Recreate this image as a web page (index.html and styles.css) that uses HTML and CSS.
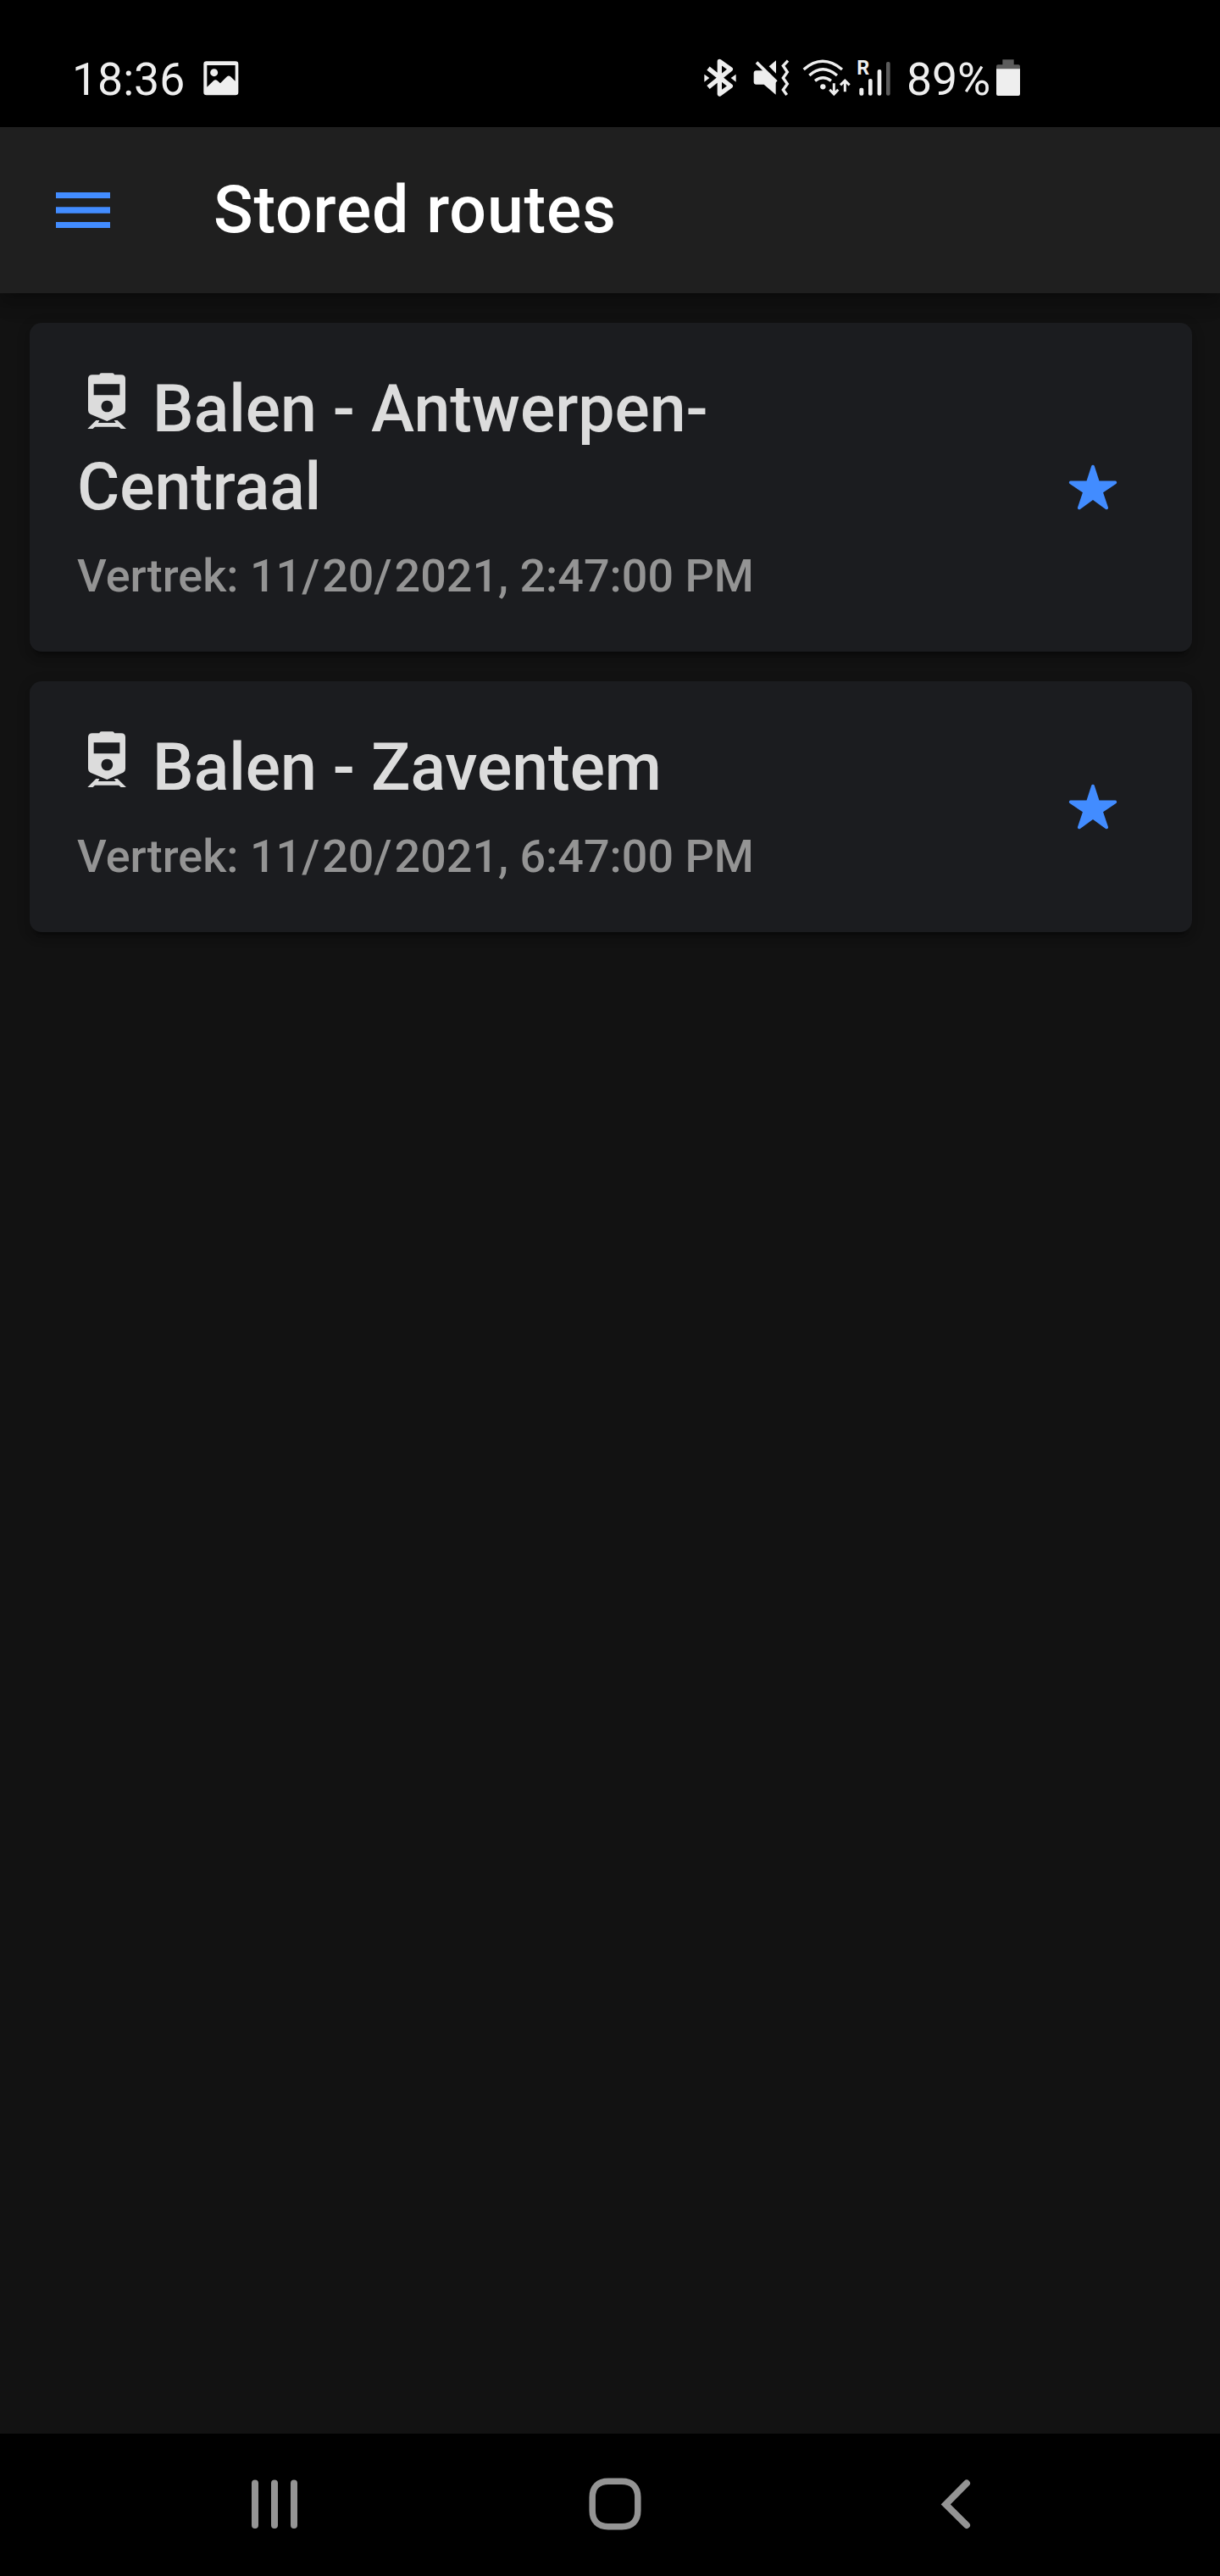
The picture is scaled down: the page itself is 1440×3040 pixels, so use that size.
FILE: index.html
```html
<!DOCTYPE html>
<html lang="en">
<head>
<meta charset="utf-8">
<title>Stored routes</title>
<link rel="stylesheet" href="styles.css">
</head>
<body>
<svg class="defs" width="0" height="0">
  <symbol id="train" viewBox="0 0 210 210">
    <path fill-rule="evenodd" d="M39 24Q39 10 54 10H79Q80 4 86 4H125Q131 4 132 10H156Q171 10 171 24V136Q171 145 163 149L106 174 47 149Q39 145 39 136ZM59 43V82H151V43ZM106 101a20.500 20.500 0 1 0 .1 0z"/>
    <path d="M37 201 67 171h12l-4 9h62l-6-9h12l31 30h-19l-7-7H63l-7 7z"/>
  </symbol>
  <symbol id="star" viewBox="0 0 512 512">
    <path d="M394 480a16 16 0 01-9.390-3L256 383.760 127.390 477a16 16 0 01-24.550-18.080L153 310.350 23 221.200a16 16 0 019-29.200h160.380l48.400-148.950a16 16 0 0130.440 0l48.400 149H480a16 16 0 019.050 29.200L359 310.350l50.130 148.530A16 16 0 01394 480z"/>
  </symbol>
</svg>
<div class="screen">
  <div class="status">
    <div class="status-left">
      <span class="status-text">18:36</span>
      <svg class="picture" viewBox="530 50 140 150">
        <path fill-rule="evenodd" d="M550 66h103q10 0 10 10v100q0 10-10 10H550q-10 0-10-10V76q0-10 10-10zm2 14v77l24-23q6-5 12 0l11 10 24-24q6-5 12 0l17 16V80z"/>
        <circle cx="577" cy="106" r="13.500"/>
      </svg>
    </div>
    <svg class="bluetooth" viewBox="50 50 160 150">
      <path class="line" d="M77 91l79 63-39 28V66l39 28-79 64" stroke-width="16" stroke-linejoin="round"/>
      <path d="M63 112l18 13-18 14zM175 112l-18 13 18 14z"/>
    </svg>
    <svg class="mute" viewBox="210 50 180 150">
      <path d="M239 108q0-9 9-9h30l39 39v46l-42-36h-27q-9 0-9-9zM293 84l25-21v46z"/>
      <path class="line" d="M249 70l70 69" stroke-width="11"/>
      <path class="line" d="M360 64l-17 18 15 22-15 21 15 21-15 21 13 18" stroke-width="10"/>
    </svg>
    <svg class="wifi" viewBox="390 50 205 150">
      <path class="line" d="M416 95Q482 37 552 95M436 116q47-43 98 0M456 135q28-22 57 0" stroke-width="10"/>
      <circle cx="484" cy="156" r="9.500"/>
      <path class="line" d="M523 144v38M508 166l15 16 15-16M562 174v-39M546 150l16-16 16 16" stroke-width="9"/>
    </svg>
    <svg class="signal" viewBox="595 50 160 150">
      <text x="605" y="113" class="roaming">R</text>
      <rect x="614" y="160" width="15" height="27" rx="6"/>
      <rect x="646" y="128" width="14" height="59" rx="6"/>
      <rect x="678" y="95" width="14" height="92" rx="6"/>
      <rect x="709" y="68" width="14" height="119" rx="6" class="dim"/>
    </svg>
    <span class="status-text percent">89%</span>
    <svg class="battery" viewBox="378 50 84 150">
      <path class="dim" d="M400 60h40v18h16q6 0 6 6v12h-84V84q0-6 6-6h16z"/>
      <path d="M378 93h84v89q0 6-6 6h-72q-6 0-6-6z"/>
    </svg>
  </div>
  <header class="toolbar">
    <svg class="menu" viewBox="0 0 64 42"><path d="M0 0h64v7H0zM0 17.300h64v7.400H0zM0 35h64v7H0z"/></svg>
    <h1 class="title">Stored routes</h1>
  </header>
  <main class="routes">
    <article class="card">
      <div class="card-body">
        <h2 class="card-title"><svg class="train"><use href="#train"/></svg> Balen - Antwerpen-<br>Centraal</h2>
        <p class="card-sub">Vertrek: 11<span class="slash">/</span>20<span class="slash">/</span>2021, 2:47:00 PM</p>
      </div>
      <svg class="star"><use href="#star"/></svg>
    </article>
    <article class="card">
      <div class="card-body">
        <h2 class="card-title"><svg class="train"><use href="#train"/></svg> Balen - Zaventem</h2>
        <p class="card-sub">Vertrek: 11<span class="slash">/</span>20<span class="slash">/</span>2021, 6:47:00 PM</p>
      </div>
      <svg class="star"><use href="#star"/></svg>
    </article>
  </main>
  <nav class="navbar">
    <svg class="nav-icon" viewBox="0 0 64 64"><path d="M9 7.500v49.500M32 7.500v49.500M55 7.500v49.500" stroke-width="8" stroke-linecap="round"/></svg>
    <svg class="nav-icon" viewBox="0 0 64 64"><path d="M25 5.200H41C53 5.200 59.800 12 59.800 24V40C59.800 52 53 58.800 41 58.800H25C13 58.800 6.200 52 6.200 40V24C6.200 12 13 5.200 25 5.200z" stroke-width="7.500"/></svg>
    <svg class="nav-icon" viewBox="0 0 64 64"><path d="M46 7.500L21.300 32.500 46 57" stroke-width="8" stroke-linecap="round"/></svg>
  </nav>
</div>
</body>
</html>
```
FILE: styles.css
```css
* { box-sizing: border-box; }
body { margin: 0; background: #121212; font-family: Roboto, "Liberation Sans", sans-serif; }
svg { display: block; flex: none; }
.defs { position: absolute; }
.screen { display: flex; flex-direction: column; width: 1440px; height: 3040px; overflow: hidden; }

.status { display: flex; height: 150px; padding-top: 66.67px; background: #000; color: #eee; fill: #eee; }
.status svg { height: 50px; }
.status-left { display: flex; width: 826.67px; padding-left: 85px; }
.status-text { font-size: 53.5px; line-height: 50px; padding-top: 2px; height: 52px; }
.picture { width: 46.67px; margin-left: 18.5px; }
.bluetooth { width: 53.33px; }
.mute { width: 60px; }
.wifi { width: 68.33px; }
.signal { width: 53.33px; }
.percent { width: 106px; margin-left: 8.33px; }
.battery { width: 28px; }
.line { fill: none; stroke: #eee; }
.dim { fill: #5c5c5c; }
.roaming { font-size: 70px; font-weight: 700; }

.toolbar {
  display: flex; align-items: center; height: 196px; padding: 0 66px; background: #1f1f1f;
  box-shadow: 0 7px 14px -3.5px rgba(0,0,0,.2), 0 14px 17.5px rgba(0,0,0,.14), 0 3.5px 35px rgba(0,0,0,.12);
}
.menu { width: 64px; height: 42px; fill: #428cff; }
.title { margin: 0 0 0 122px; font-size: 77px; line-height: 92px; font-weight: 500; letter-spacing: .011em; color: #fff; }

.routes { display: flex; flex: 1; flex-direction: column; gap: 35px; padding: 35px 33px 0 35px; }
.card {
  display: flex; align-items: center; justify-content: space-between; padding: 56px 87.5px 56px 56px;
  border-radius: 14px; background: #1b1c1f;
  box-shadow: 0 10.5px 3.5px -7px rgba(0,0,0,.2), 0 7px 7px rgba(0,0,0,.14), 0 3.5px 17.5px rgba(0,0,0,.12);
}
.card-title { margin: 0; font-size: 77px; line-height: 92.4px; font-weight: 500; letter-spacing: -.04px; color: #dcdcdc; }
.card-sub { margin: 26.5px 0 0; font-size: 53.9px; line-height: 64.7px; font-weight: 500; color: #949494; }
.slash { letter-spacing: 3px; }
.train { display: inline-block; width: 70px; height: 70px; fill: #dcdcdc; vertical-align: 0; }
.star { width: 60px; height: 60px; fill: #428cff; }

.navbar { display: flex; justify-content: space-between; align-items: center; height: 168px; padding: 0 281.5px 2px 292px; background: #000; }
.nav-icon { width: 64px; height: 64px; fill: none; stroke: #949494; }
```
